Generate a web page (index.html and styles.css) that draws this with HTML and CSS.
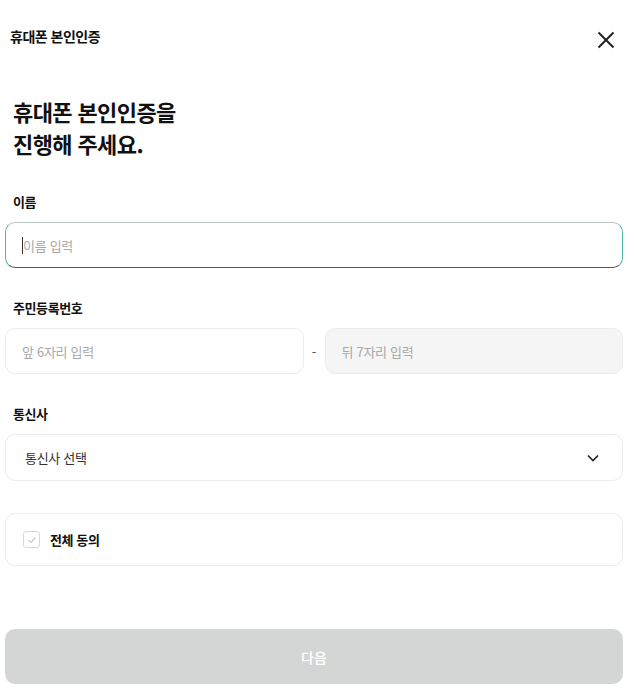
FILE: index.html
```html
<!DOCTYPE html>
<html lang="ko">
<head>
    <meta charset="UTF-8">
    <meta name="viewport" content="width=device-width, initial-scale=1.0">
    <title>휴대폰 본인인증</title>
    <link rel="stylesheet" href="styles.css">
</head>
<body>

    <div class="container">
        <!-- Header -->
        <div class="header">
            <span class="header-title">휴대폰 본인인증</span>
            <button class="close" aria-label="닫기">
                <svg width="20" height="20" viewBox="0 0 20 20"><path d="M2.5 2.5 L17.5 17.5 M17.5 2.5 L2.5 17.5" stroke="#222" stroke-width="2" fill="none"/></svg>
            </button>
        </div>

        <h1>휴대폰 본인인증을<br>진행해 주세요.</h1>

        <!-- Name -->
        <div class="field">
            <label>이름</label>
            <div class="box focus"><span class="caret"></span><span class="ph">이름 입력</span></div>
        </div>

        <!-- Resident number -->
        <div class="field">
            <label>주민등록번호</label>
            <div class="row">
                <div class="box"><span class="ph">앞 6자리 입력</span></div>
                <span class="dash">-</span>
                <div class="box disabled"><span class="ph">뒤 7자리 입력</span></div>
            </div>
        </div>

        <!-- Carrier -->
        <div class="field">
            <label>통신사</label>
            <div class="box select">
                <span class="value">통신사 선택</span>
                <svg width="14" height="14" viewBox="0 0 14 14"><path d="M2 4.5 L7 9.5 L12 4.5" stroke="#222" stroke-width="1.6" fill="none"/></svg>
            </div>
        </div>

        <!-- Agree -->
        <div class="agree">
            <span class="check">
                <svg width="12" height="12" viewBox="0 0 12 12"><path d="M2.5 6.2 L5 8.5 L9.5 3.5" stroke="#c8c8c8" stroke-width="1.2" fill="none"/></svg>
            </span>
            <span class="agree-text">전체 동의</span>
        </div>

        <button class="next">다음</button>
    </div>

</body>
</html>
```

FILE: styles.css
```css
* {
    margin: 0;
    padding: 0;
    box-sizing: border-box;
    font-family: "Noto Sans CJK KR", "Noto Sans", sans-serif;
}
body {
    background: #fff;
    color: #111;
}
.container {
    padding: 0 11px 0 5px;
}
.header {
    display: flex;
    justify-content: space-between;
    align-items: center;
    height: 71px;
    padding: 0 7px 0 5px;
}
.header-title {
    font-size: 14px;
    font-weight: 700;
    letter-spacing: -0.5px;
}
.close {
    border: none;
    background: none;
    width: 20px;
    height: 20px;
    margin-top: 8px;
}
h1 {
    font-size: 22px;
    font-weight: 700;
    line-height: 32px;
    letter-spacing: -0.6px;
    padding: 24px 0 0 8px;
}
.field {
    margin-top: 34px;
}
.field + .field {
    margin-top: 31px;
}
label {
    display: block;
    font-size: 13px;
    font-weight: 700;
    line-height: 18px;
    padding-left: 8px;
    margin-bottom: 11px;
    letter-spacing: -0.4px;
}
.box {
    display: flex;
    align-items: center;
    height: 46px;
    border: 1px solid #ececec;
    border-radius: 10px;
    padding: 0 16px;
    background: #fff;
}
.focus {
    border-color: #bcc6c2 #4fb7a3 #555 #4fb7a3;
}
.caret {
    width: 1px;
    height: 17px;
    background: #333;
}
.ph {
    font-size: 13px;
    color: #a8a8a8;
    letter-spacing: -0.3px;
}
.row {
    display: flex;
    align-items: center;
}
.row .box {
    flex: 1;
}
.dash {
    width: 21px;
    text-align: center;
    font-size: 13px;
    color: #555;
}
.disabled {
    background: #f5f5f5;
}
.select {
    height: 47px;
    justify-content: space-between;
    padding: 0 22px 0 19px;
}
.value {
    font-size: 13px;
    color: #333;
    letter-spacing: -0.3px;
}
.agree {
    display: flex;
    align-items: center;
    gap: 10px;
    height: 53px;
    margin-top: 32px;
    border: 1px solid #ececec;
    border-radius: 10px;
    padding: 0 17px;
}
.check {
    display: flex;
    align-items: center;
    justify-content: center;
    width: 17px;
    height: 17px;
    border: 1px solid #d8d8d8;
    border-radius: 3px;
}
.agree-text {
    font-size: 13px;
    font-weight: 700;
    letter-spacing: -0.4px;
}
.next {
    display: block;
    width: 100%;
    height: 55px;
    margin-top: 63px;
    border: none;
    border-radius: 10px;
    background: #d4d6d5;
    color: #fff;
    font-size: 14px;
    font-weight: 500;
}
```
